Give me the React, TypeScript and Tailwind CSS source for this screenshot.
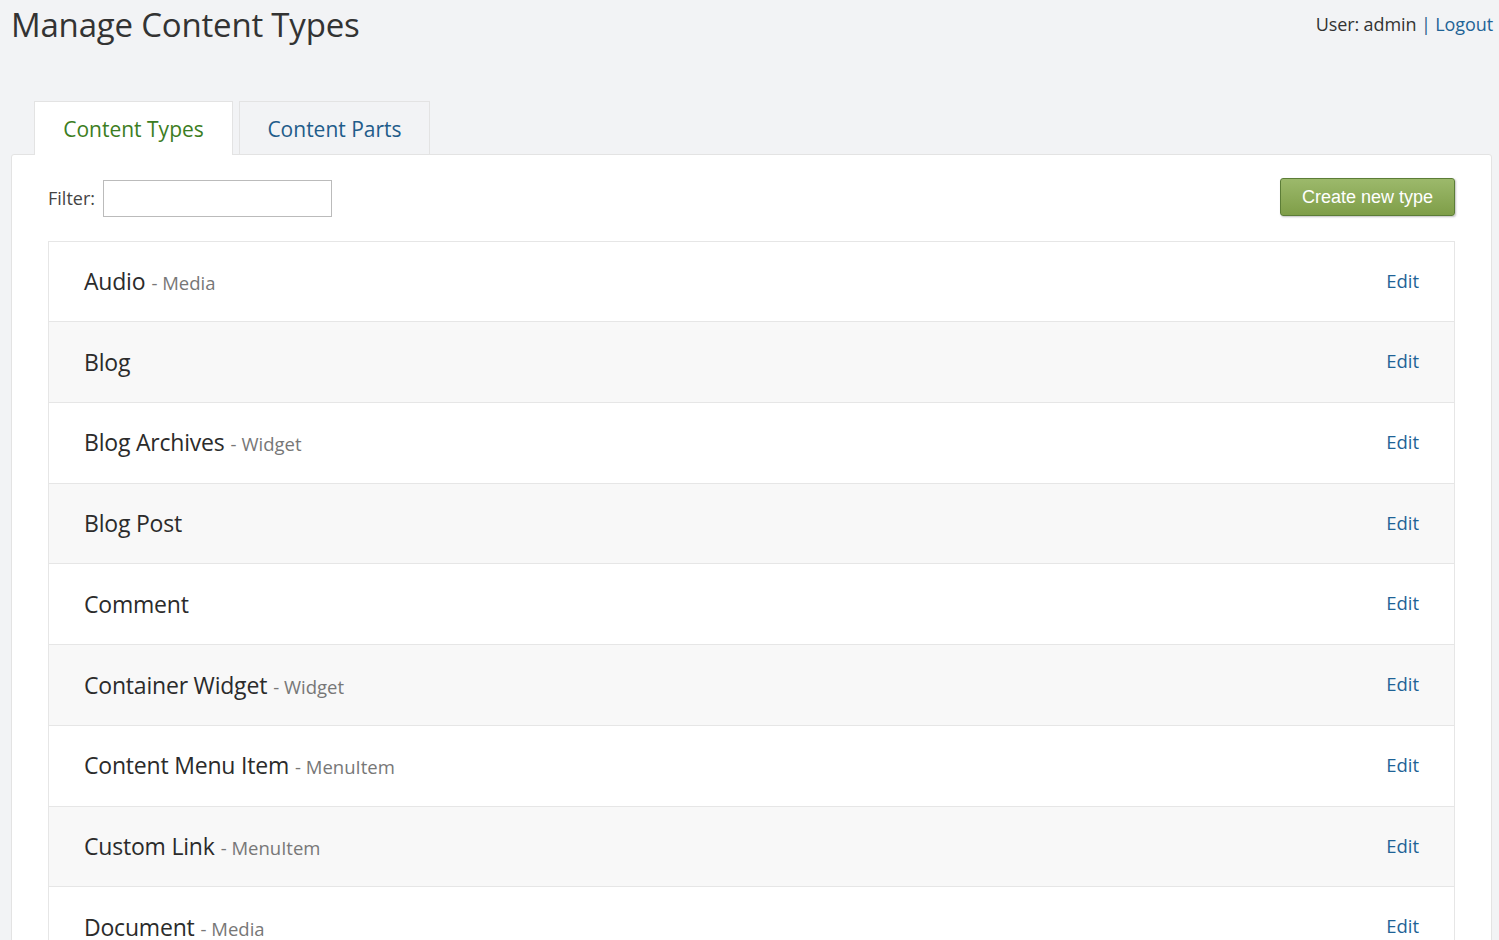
import React from 'react';

const types: { name: string; kind?: string }[] = [
  { name: 'Audio', kind: 'Media' },
  { name: 'Blog' },
  { name: 'Blog Archives', kind: 'Widget' },
  { name: 'Blog Post' },
  { name: 'Comment' },
  { name: 'Container Widget', kind: 'Widget' },
  { name: 'Content Menu Item', kind: 'MenuItem' },
  { name: 'Custom Link', kind: 'MenuItem' },
  { name: 'Document', kind: 'Media' },
];

export default function App() {
  return (
    <div
      className="bg-[#f2f3f5] text-[#333] overflow-hidden h-[940px]"
      style={{ fontFamily: '"Open Sans", "Noto Sans", sans-serif' }}
    >
      {/* Header */}
      <div className="flex items-start justify-between pl-[11px] pr-[6px]">
        <h1 className="text-[33px] leading-[50px] text-[#333] tracking-[-0.2px]">Manage Content Types</h1>
        <div className="text-[18px] leading-[48px] text-[#333] tracking-[-0.1px]">
          User: admin <span className="text-[#1f5c8a]">|</span>{' '}
          <a href="#" className="text-[#1f6396]">Logout</a>
        </div>
      </div>

      {/* Tabs */}
      <div className="flex gap-[6px] pl-[34px] mt-[51px]">
        <div className="w-[199px] h-[54px] bg-white border border-[#e3e3e3] border-b-0 flex items-center justify-center pt-[3px] text-[21px] text-[#3c7d22] relative z-10">
          Content Types
        </div>
        <div className="w-[191px] h-[53px] bg-[#f2f3f5] border border-[#e3e3e3] border-b-0 flex items-center justify-center pt-[3px] text-[21px] text-[#1f5c8a]">
          Content Parts
        </div>
      </div>

      {/* Panel */}
      <div className="ml-[11px] mr-[7px] -mt-px bg-white border border-[#e3e3e3] rounded-t-[3px] px-[36px] pt-[22px]">
        <div className="flex items-center justify-between">
          <div className="flex items-center gap-[8px] mt-[3px]">
            <label className="text-[18px] text-[#444]">Filter:</label>
            <input className="w-[229px] h-[37px] border border-[#bbb] bg-white outline-none" />
          </div>
          <button
            className="w-[175px] h-[38px] rounded-[3px] border border-[#5c7d37] bg-gradient-to-b from-[#9cb96b] to-[#7f9e48] text-white text-[18px] shadow-[1px_1px_2px_rgba(0,0,0,0.25)]"
            style={{ fontFamily: '"Liberation Sans", Arial, sans-serif' }}
          >
            Create new type
          </button>
        </div>

        <div className="mt-[24px] border border-[#e6e6e6]">
          {types.map((t, i) => (
            <div
              key={t.name}
              className={`flex items-center justify-between pl-[35px] pr-[35px] ${
                i > 0 ? 'h-[80.75px] border-t border-[#e6e6e6]' : 'h-[79px]'
              } ${i % 2 === 1 ? 'bg-[#f8f8f8]' : 'bg-white'}`}
            >
              <div className="flex items-baseline">
                <span className="text-[23px] text-[#2b2b2b] tracking-[-0.2px]">{t.name}</span>
                {t.kind && (
                  <span className="text-[18.5px] text-[#777] ml-[6px]">- {t.kind}</span>
                )}
              </div>
              <a href="#" className="text-[18.5px] text-[#1f6396] -mt-[2px]">
                Edit
              </a>
            </div>
          ))}
        </div>
      </div>
    </div>
  );
}
